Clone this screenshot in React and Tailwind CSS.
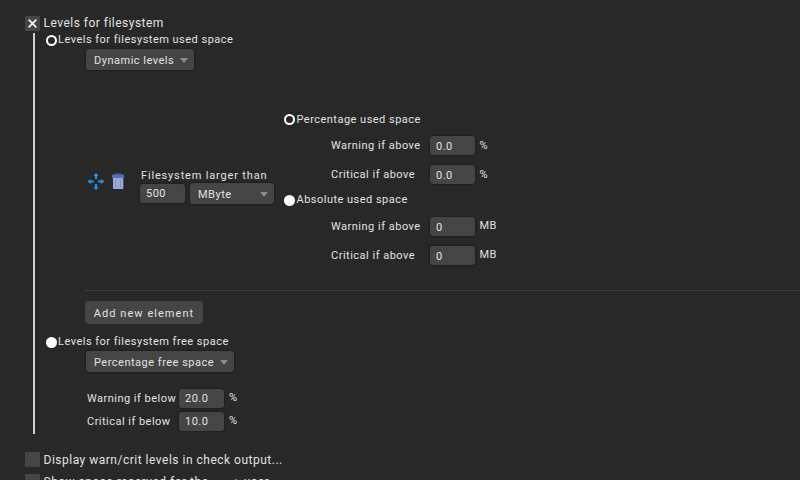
import React from "react";

function Label({ className = "", children }) {
  return <span className={"block whitespace-pre text-[11px] leading-[14px] " + className}>{children}</span>;
}

function Input({ value, className = "pt-px" }) {
  return (
    <input
      readOnly
      value={value}
      className={"block h-[19px] w-[45px] shrink-0 rounded-[3px] bg-[#454545] px-[6px] text-[11px] tracking-[0.5px] text-[#e2e2e2] shadow-[0_0_2px_#111] outline-none " + className}
    />
  );
}

function Select({ className, children }) {
  return (
    <div className={"flex h-[21px] shrink-0 items-start justify-between rounded-[3px] bg-[#454545] pr-[6px] pl-2 shadow-[0_0_2px_#111] " + className}>
      <Label className="mt-[5px]">{children}</Label>
      <svg width="8" height="5" viewBox="0 0 8 5" className="mt-[9px]">
        <path d="M0 0h8L4 5z" fill="#8a8a8a" />
      </svg>
    </div>
  );
}

function Radio({ checked, children, className = "" }) {
  return (
    <div className={"flex h-[14px] items-start " + className}>
      <span className={"mr-px block size-[11px] shrink-0 rounded-full " + (checked ? "border-2 border-white bg-[#282828]" : "bg-white")} />
      {children}
    </div>
  );
}

function Checkbox({ checked }) {
  return (
    <span className="flex size-[15px] shrink-0 items-center justify-center rounded-[1px] bg-[#454545]">
      {checked && (
        <svg width="9" height="9" viewBox="0 0 9 9" stroke="#f4f4f4" strokeWidth="1.7">
          <path d="M.7.7l7.6 7.6M8.3.7L.7 8.3" />
        </svg>
      )}
    </span>
  );
}

function Level({ label, value, unit, className }) {
  return (
    <div className={"flex h-[19px] items-start " + className}>
      <Label className="mt-[3px] w-[99px] tracking-[0.5px]">{label}</Label>
      <Input value={value} />
      <Label className={"ml-[4.5px] tracking-[0.5px] " + (unit === "%" ? "mt-[3px]" : "mt-[2px]")}>{unit}</Label>
    </div>
  );
}

function FreeLevel({ label, value, className }) {
  return (
    <div className={"flex h-[19px] items-start " + className}>
      <Label className="mt-[3px] w-[92px] tracking-[0.48px]">{label}</Label>
      <Input value={value} className="pb-px" />
      <Label className="mt-[2px] ml-[5px]">%</Label>
    </div>
  );
}

export default function App() {
  return (
    <div className="h-[480px] w-[800px] overflow-hidden bg-[#282828] pt-[15px] font-[Roboto,sans-serif] text-[#e2e2e2]">
      <div className="ml-[25px] flex h-[18px] items-start gap-[3.5px]">
        <span className="mt-px">
          <Checkbox checked />
        </span>
        <span className="text-[12px] leading-4 tracking-[0.48px]">Levels for filesystem</span>
      </div>

      <section className="ml-[33px] h-[401px] border-l-2 border-[#d0d0d0] pl-[11px]">
        <Radio checked className="pt-[2px]">
          <Label className="-mt-[2px] tracking-[0.49px]">Levels for filesystem used space</Label>
        </Radio>
        <Select className="mt-[2px] ml-10 w-[108px] tracking-[0.5px]">Dynamic levels</Select>

        <div className="ml-[39px] flex h-[221px] border-b border-[#3c3c3c]">
          <div className="mt-[102px] ml-[2px] flex h-[18px] w-[53px] items-center gap-[8px]">
            <svg width="17" height="17" viewBox="0 0 17 17" fill="#2196f3" className="shrink-0">
              <path d="M9 0l2.5 3H10v3H8V3H6.5zM9 17l2.5-3H10v-3H8v3H6.5zM.5 8.5l3-2.5v1.5h3v2h-3V11zM17.2 8.5l-3-2.5v1.5h-3v2h3V11z" />
            </svg>
            <svg width="12" height="17" viewBox="0 0 12 17" className="shrink-0">
              <path d="M3.5 2V.7h5V2" fill="none" stroke="#4a5699" />
              <path d="M0 2.5Q0 1.5 1 1.5h10q1 0 1 1V5H0z" fill="#5c6bc0" />
              <path d="M1 5h10.3v10q0 1-1 1H2q-1 0-1-1z" fill="#9fa8da" />
              <path d="M3.9 6v9M8.3 6v9" stroke="#7d89cc" />
            </svg>
          </div>
          <div className="mt-[98px] w-[144px]">
            <Label className="ml-px pt-px tracking-[0.83px]">Filesystem larger than</Label>
            <div className="flex items-center gap-[5px]">
              <Input value="500" className="pb-px" />
              <Select className="w-[84px] tracking-[0.5px]">MByte</Select>
            </div>
          </div>
          <div className="mt-[42px]">
            <Radio checked className="pt-[2px]">
              <Label className="-mt-px ml-[0.5px] tracking-[0.48px]">Percentage used space</Label>
            </Radio>
            <Level label="Warning if above" value="0.0" unit="%" className="mt-[10px] ml-[47px]" />
            <Level label="Critical if above" value="0.0" unit="%" className="mt-[10px] ml-[47px]" />
            <Radio className="mt-[8px] pt-[3px]">
              <Label className="-mt-[2px] ml-[0.5px] tracking-[0.48px]">Absolute used space</Label>
            </Radio>
            <Level label="Warning if above" value="0" unit="MB" className="mt-[11px] ml-[47px]" />
            <Level label="Critical if above" value="0" unit="MB" className="mt-[10px] ml-[47px]" />
          </div>
        </div>

        <button className="mt-[10px] ml-[39px] block h-[23px] w-[118px] rounded-[4px] bg-[#454545] pt-[3px] text-[11px] leading-[14px] tracking-[1.05px] whitespace-nowrap">
          Add new element
        </button>
        <Radio className="mt-[10px] pt-[3px]">
          <Label className="-mt-[2px] tracking-[0.49px]">Levels for filesystem free space</Label>
        </Radio>
        <Select className="mt-[3px] ml-10 w-[148px] tracking-[0.5px]">Percentage free space</Select>
        <FreeLevel label="Warning if below" value="20.0" className="mt-[17px] ml-[41px]" />
        <FreeLevel label="Critical if below" value="10.0" className="mt-[4px] ml-[41px]" />
      </section>

      <div className="mt-[18px] ml-[25px] flex h-[22px] items-start gap-[3.5px]">
        <Checkbox />
        <span className="text-[12px] leading-4 tracking-[0.5px]">Display warn/crit levels in check output...</span>
      </div>
      <div className="ml-[25px] flex items-start gap-[3.5px]">
        <Checkbox />
        <span className="text-[12px] leading-4 tracking-[0.5px] whitespace-nowrap">
          Show space reserved for the <span className="font-[Liberation_Mono,monospace] text-[11px]">root</span> user
        </span>
      </div>
    </div>
  );
}
